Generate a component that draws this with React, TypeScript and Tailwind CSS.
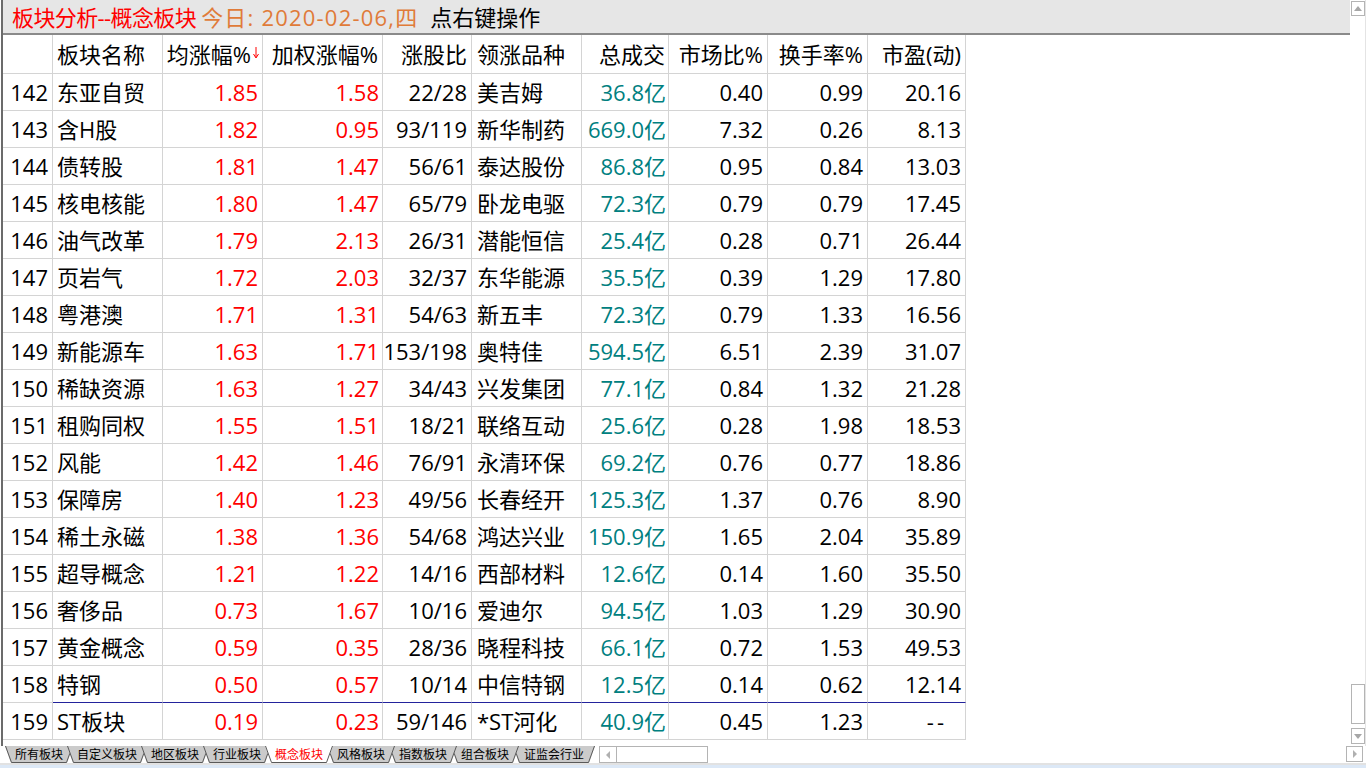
import React from "react";

type Row = [string, string, string, string, string, string, string, string, string, string];

const rows: Row[] = [
  ["142", "东亚自贸", "1.85", "1.58", "22/28", "美吉姆", "36.8亿", "0.40", "0.99", "20.16"],
  ["143", "含H股", "1.82", "0.95", "93/119", "新华制药", "669.0亿", "7.32", "0.26", "8.13"],
  ["144", "债转股", "1.81", "1.47", "56/61", "泰达股份", "86.8亿", "0.95", "0.84", "13.03"],
  ["145", "核电核能", "1.80", "1.47", "65/79", "卧龙电驱", "72.3亿", "0.79", "0.79", "17.45"],
  ["146", "油气改革", "1.79", "2.13", "26/31", "潜能恒信", "25.4亿", "0.28", "0.71", "26.44"],
  ["147", "页岩气", "1.72", "2.03", "32/37", "东华能源", "35.5亿", "0.39", "1.29", "17.80"],
  ["148", "粤港澳", "1.71", "1.31", "54/63", "新五丰", "72.3亿", "0.79", "1.33", "16.56"],
  ["149", "新能源车", "1.63", "1.71", "153/198", "奥特佳", "594.5亿", "6.51", "2.39", "31.07"],
  ["150", "稀缺资源", "1.63", "1.27", "34/43", "兴发集团", "77.1亿", "0.84", "1.32", "21.28"],
  ["151", "租购同权", "1.55", "1.51", "18/21", "联络互动", "25.6亿", "0.28", "1.98", "18.53"],
  ["152", "风能", "1.42", "1.46", "76/91", "永清环保", "69.2亿", "0.76", "0.77", "18.86"],
  ["153", "保障房", "1.40", "1.23", "49/56", "长春经开", "125.3亿", "1.37", "0.76", "8.90"],
  ["154", "稀土永磁", "1.38", "1.36", "54/68", "鸿达兴业", "150.9亿", "1.65", "2.04", "35.89"],
  ["155", "超导概念", "1.21", "1.22", "14/16", "西部材料", "12.6亿", "0.14", "1.60", "35.50"],
  ["156", "奢侈品", "0.73", "1.67", "10/16", "爱迪尔", "94.5亿", "1.03", "1.29", "30.90"],
  ["157", "黄金概念", "0.59", "0.35", "28/36", "晓程科技", "66.1亿", "0.72", "1.53", "49.53"],
  ["158", "特钢", "0.50", "0.57", "10/14", "中信特钢", "12.5亿", "0.14", "0.62", "12.14"],
  ["159", "ST板块", "0.19", "0.23", "59/146", "*ST河化", "40.9亿", "0.45", "1.23", "--"],
];

const tabs = [
  { label: "所有板块", w: 68 },
  { label: "自定义板块", w: 80 },
  { label: "地区板块", w: 68 },
  { label: "行业板块", w: 68 },
  { label: "概念板块", w: 68, active: true },
  { label: "风格板块", w: 68 },
  { label: "指数板块", w: 68 },
  { label: "组合板块", w: 68 },
  { label: "证监会行业", w: 82 },
];

const head = "h-[39px] flex items-center whitespace-nowrap border-r border-b border-[#d4d4d4]";
const cell = "h-[37px] flex items-center whitespace-nowrap border-r border-b border-[#d4d4d4]";

function Tab({ label, w, active, z }: { label: string; w: number; active?: boolean; z: number }) {
  return (
    <div className="relative h-[17px] -ml-[6px] first:ml-0 flex items-center justify-center shrink-0" style={{ width: w, zIndex: z }}>
      <svg className="absolute inset-0" width={w} height={17}>
        <path d={`M0 0 L${w} 0 L${w - 6} 17 L6 17 Z`} fill={active ? "#ffffff" : "#cbcbcb"} />
        <path d={`M0.5 0 L6.5 16.5 L${w - 6.5} 16.5 L${w - 0.5} 0`} fill="none" stroke="#5a5a5a" strokeWidth="1" />
      </svg>
      <span className={`relative text-[12px] leading-none ${active ? "text-[#ff0000]" : "text-black"}`}>{label}</span>
    </div>
  );
}

export default function App() {
  const activeIdx = tabs.findIndex((t) => t.active);
  return (
    <div className="w-[1366px] h-[768px] overflow-hidden bg-white flex flex-col font-['Open_Sans','Noto_Sans_CJK_SC',sans-serif] text-black">
      <div className="h-[746px] flex">
        {/* main panel */}
        <div className="w-[1349px] ml-[1px] border-l-2 border-[#6b6b6b] flex flex-col">
          <div className="h-[35px] shrink-0 bg-[#e6e6e6] border-b-2 border-[#8a8a8a] flex items-center pl-[9px] text-[22px] leading-none">
            <span className="text-[#ff0000] tracking-[-0.6px]">板块分析--概念板块</span>
            <span className="text-[#e07b39] ml-[5px] tracking-[1.2px]">今日: 2020-02-06,四</span>
            <span className="ml-[12px]">点右键操作</span>
          </div>

          <div className="grid grid-cols-[50px_110px_100px_120px_89px_110px_87px_99px_100px_98px] w-[963px] text-[22px] leading-none">
            {/* header */}
            <div className={head} />
            <div className={`${head} pl-1`}>板块名称</div>
            <div className={`${head} justify-end pr-[2px]`}>
              均涨幅%
              <svg width="8" height="14" className="self-start mt-[11px] ml-[1px]">
                <line x1="4" y1="1" x2="4" y2="11" stroke="#ff0000" strokeWidth="1" />
                <path d="M1.5 8 L4 12 L6.5 8" fill="none" stroke="#ff0000" strokeWidth="1" />
              </svg>
            </div>
            <div className={`${head} justify-end pr-1`}>加权涨幅%</div>
            <div className={`${head} justify-end pr-1`}>涨股比</div>
            <div className={`${head} pl-[5px]`}>领涨品种</div>
            <div className={`${head} justify-end pr-[3px]`}>总成交</div>
            <div className={`${head} justify-end pr-1`}>市场比%</div>
            <div className={`${head} justify-end pr-1`}>换手率%</div>
            <div className={`${head} justify-end pr-1`}>市盈(动)</div>

            {rows.map((r, i) => {
              const sep = i === 16 ? "border-b-[#23239c]" : "";
              return (
                <React.Fragment key={r[0]}>
                  <div className={`${cell} justify-end pr-1`}>{r[0]}</div>
                  <div className={`${cell} ${sep} pl-1`}>{r[1]}</div>
                  <div className={`${cell} ${sep} justify-end pr-1 text-[#ff0000]`}>{r[2]}</div>
                  <div className={`${cell} ${sep} justify-end pr-[3px] text-[#ff0000]`}>{r[3]}</div>
                  <div className={`${cell} ${sep} justify-end pr-1`}>{r[4]}</div>
                  <div className={`${cell} ${sep} pl-[5px]`}>{r[5]}</div>
                  <div className={`${cell} ${sep} justify-end pr-[2px] text-[#008080]`}>{r[6]}</div>
                  <div className={`${cell} ${sep} justify-end pr-1`}>{r[7]}</div>
                  <div className={`${cell} ${sep} justify-end pr-1`}>{r[8]}</div>
                  {r[9] === "--" ? (
                    <div className={`${cell} ${sep} justify-end pr-[18px] tracking-[3px]`}>{r[9]}</div>
                  ) : (
                    <div className={`${cell} ${sep} justify-end pr-1`}>{r[9]}</div>
                  )}
                </React.Fragment>
              );
            })}
          </div>
        </div>

        {/* vertical scrollbar */}
        <div className="w-[16px] flex flex-col items-start pl-[1px] border-r border-[#e4e4e4]">
          <div className="mt-[1px] w-[14px] h-[15px] border border-[#b4b4b4] flex items-center justify-center">
            <svg width="8" height="5"><path d="M4 0 L8 5 L0 5 Z" fill="#a6a6a6" /></svg>
          </div>
          <div className="flex-1" />
          <div className="w-[14px] h-[40px] border border-[#b4b4b4]" />
          <div className="mt-[4px] mb-[2px] w-[14px] h-[16px] border border-[#b4b4b4] flex items-center justify-center">
            <svg width="8" height="5"><path d="M0 0 L8 0 L4 5 Z" fill="#a6a6a6" /></svg>
          </div>
        </div>
      </div>

      {/* sheet tabs + horizontal scrollbar */}
      <div className="h-[17px] flex items-start pl-[5px]">
        <div className="flex">
          {tabs.map((t, i) => (
            <Tab
              key={t.label}
              label={t.label}
              w={t.w}
              active={t.active}
              z={t.active ? 50 : i < activeIdx ? i + 1 : 40 - i}
            />
          ))}
        </div>
        <div className="ml-[4px] w-[109px] h-[17px] border border-[#b4b4b4] flex">
          <div className="w-[17px] h-full border-r border-[#b4b4b4] flex items-center justify-center">
            <svg width="4" height="8"><path d="M4 0 L4 8 L0 4 Z" fill="#b0b0b0" /></svg>
          </div>
        </div>
        <div className="ml-auto mr-[3px] w-[17px] h-[16px] border border-[#b4b4b4] flex items-center justify-center">
          <svg width="4" height="8"><path d="M0 0 L4 4 L0 8 Z" fill="#b0b0b0" /></svg>
        </div>
      </div>
      <div className="h-[2px] bg-[#e2e2e2]" />
      <div className="flex-1 bg-[#dce8f6]" />
    </div>
  );
}
